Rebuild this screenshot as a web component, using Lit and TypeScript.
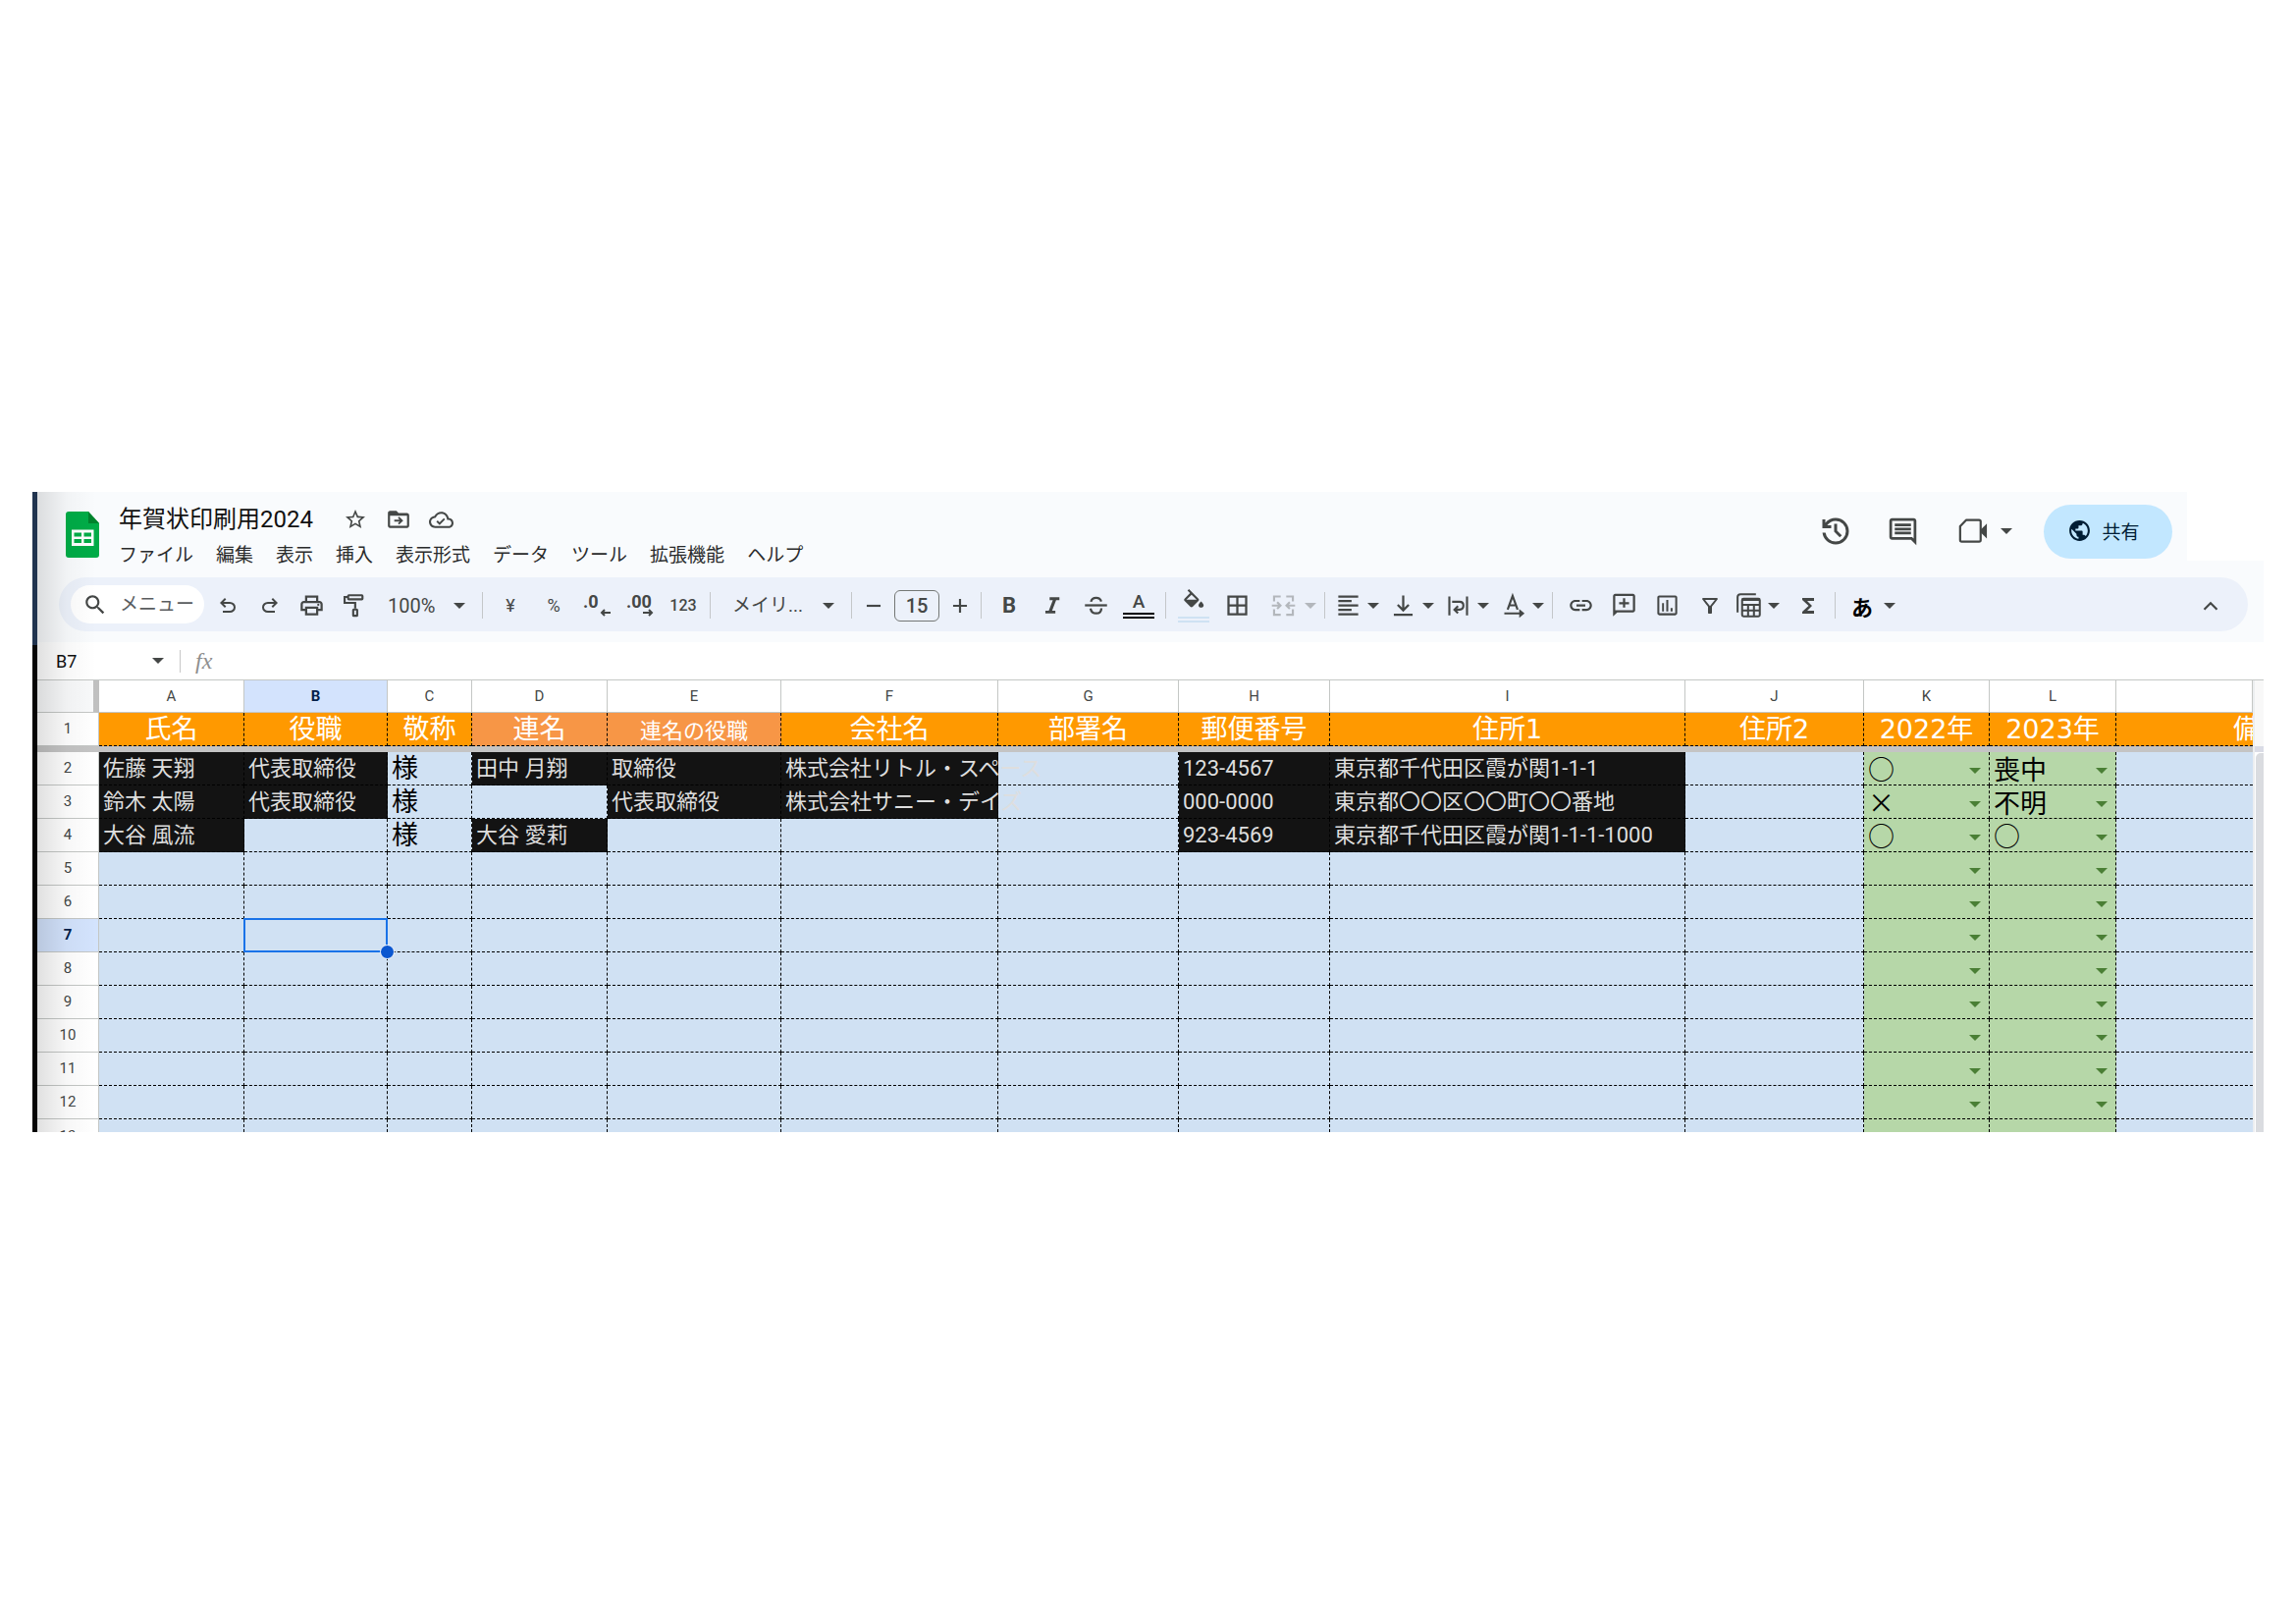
import { LitElement, html, svg, css, nothing } from "lit";
import type { TemplateResult } from "lit";
import { customElement, property } from "lit/decorators.js";
import { classMap } from "lit/directives/class-map.js";

const ICONS: Record<string, TemplateResult> = {
  search: svg`<path d="M15.5 14h-.79l-.28-.27C15.41 12.59 16 11.11 16 9.5 16 5.91 13.09 3 9.5 3S3 5.91 3 9.5 5.91 16 9.5 16c1.61 0 3.09-.59 4.23-1.57l.27.28v.79l5 4.99L20.49 19l-4.99-5zm-6 0C7.01 14 5 11.99 5 9.5S7.01 5 9.5 5 14 7.01 14 9.5 11.99 14 9.5 14z"/>`,
  undo: svg`<path d="M7 19v-2h7.1q1.575 0 2.738-1T18 13.5 16.838 11 14.1 10H7.8l2.6 2.6L9 14 4 9l5-5 1.4 1.4L7.8 8h6.3q2.425 0 4.163 1.575T20 13.5t-1.737 3.925T14.1 19z"/>`,
  redo: svg`<path d="M17 19v-2H9.9q-1.575 0-2.738-1T6 13.5 7.162 11 9.9 10h6.3l-2.6 2.6L15 14l5-5-5-5-1.4 1.4L16.2 8H9.9Q7.475 8 5.737 9.575T4 13.5t1.737 3.925T9.9 19z"/>`,
  print: svg`<path d="M19 8h-1V3H6v5H5c-1.66 0-3 1.34-3 3v6h4v4h12v-4h4v-6c0-1.66-1.34-3-3-3zM8 5h8v3H8V5zm8 12v2H8v-4h8v4zm2-2v-2H6v2H4v-4c0-.55.45-1 1-1h14c.55 0 1 .45 1 1v4h-2z"/><circle cx="18" cy="11.5" r="1"/>`,
  roller: svg`<g fill="none" stroke="currentColor" stroke-width="1.9"><rect x="6.8" y="2.9" width="13" height="3.6" rx=".6"/><path d="M6.8 4.4H3.6v5.4h9.6v5"/><rect x="11.4" y="15.8" width="3.6" height="5.6" rx=".4"/></g>`,
  star: svg`<path d="M22 9.24l-7.19-.62L12 2 9.19 8.63 2 9.24l5.46 4.73L5.82 21 12 17.27 18.18 21l-1.63-7.03L22 9.24zM12 15.4l-3.76 2.27 1-4.28-3.32-2.88 4.38-.38L12 6.1l1.71 4.04 4.38.38-3.32 2.88 1 4.28L12 15.4z"/>`,
  move: svg`<path d="M20 6h-8l-2-2H4c-1.1 0-2 .9-2 2v12c0 1.1.9 2 2 2h16c1.1 0 2-.9 2-2V8c0-1.1-.9-2-2-2zm0 12H4V8.6h16V18zM12.6 9.4l3.8 3.7-3.8 3.7-1.2-1.2 1.6-1.6H8v-1.8h5l-1.6-1.6z"/>`,
  cloud: svg`<path d="M19.35 10.04C18.67 6.59 15.64 4 12 4 9.11 4 6.6 5.64 5.35 8.04 2.34 8.36 0 10.91 0 14c0 3.31 2.69 6 6 6h13c2.76 0 5-2.24 5-5 0-2.64-2.05-4.78-4.65-4.96zM19 18H6c-2.21 0-4-1.79-4-4 0-2.05 1.53-3.76 3.56-3.97l1.07-.11.5-.95C8.08 7.14 9.94 6 12 6c2.62 0 4.88 1.86 5.39 4.43l.3 1.5 1.53.11c1.56.1 2.78 1.41 2.78 2.96 0 1.65-1.35 3-3 3zm-8.6-3.6l-1.9-1.9-1.3 1.3 3.2 3.2 5.4-5.4-1.3-1.3z"/>`,
  history: svg`<path d="M12 21q-3.45 0-6.012-2.287T3.05 13H5.1q.35 2.6 2.313 4.3T12 19q2.925 0 4.963-2.037T19 12t-2.037-4.962T12 5q-1.725 0-3.225.8T6.25 8H9v2H3V4h2v2.35q1.275-1.6 3.113-2.475T12 3q1.875 0 3.513.713t2.85 1.924 1.925 2.85T21 12t-.712 3.513-1.925 2.85-2.85 1.925T12 21m2.8-4.8L11 12.4V7h2v4.6l3.2 3.2z"/>`,
  comment: svg`<path d="M21.99 4c0-1.1-.89-2-1.99-2H4c-1.1 0-2 .9-2 2v12c0 1.1.9 2 2 2h14l4 4-.01-18zM20 4v13.17L18.83 16H4V4h16zM6 12h12v2H6zm0-3h12v2H6zm0-3h12v2H6z"/>`,
  video: svg`<path fill="none" stroke="currentColor" stroke-width="1.6" stroke-linejoin="round" d="M7.2 3.4h9.6q1.2 0 1.2 1.2v13.6q0 1.2-1.2 1.2H4q-1.2 0-1.2-1.2V8z"/><path d="M18 10.6L22.6 6v11L18 12.600z"/>`,
  globe: svg`<path d="M12 2C6.48 2 2 6.48 2 12s4.48 10 10 10 10-4.48 10-10S17.52 2 12 2zm-1 17.93c-3.95-.49-7-3.85-7-7.93 0-.62.08-1.21.21-1.79L9 15v1c0 1.1.9 2 2 2v1.93zm6.9-2.54c-.26-.81-1-1.39-1.9-1.39h-1v-3c0-.55-.45-1-1-1H8v-2h2c.55 0 1-.45 1-1V7h2c1.1 0 2-.9 2-2v-.41c2.93 1.19 5 4.06 5 7.41 0 2.08-.8 3.97-2.1 5.39z"/>`,
  minus: svg`<path d="M5.500 11h13v2h-13z"/>`,
  plus: svg`<path d="M5.500 11H11V5.500h2V11h5.500v2H13v5.500h-2V13H5.500z"/>`,
  italic: svg`<path d="M9.500 4h9.200v2.700h-3.100l-3.800 9.800h3.100v2.700H5.500v-2.700h3.200l3.800-9.800h-3z"/>`,
  strike: svg`<g fill="none" stroke="currentColor" stroke-width="2"><path d="M2 12h20"/><path d="M16.800 8.500Q15.700 5.300 12.200 5.300 8.200 5.300 7.500 8.800"/><path d="M7 14.800Q8 19.300 12.200 19.300q4.600 0 4.700-4.700"/></g>`,
  fill: svg`<path d="M16.56 8.94L7.62 0 6.21 1.41l2.38 2.38-5.15 5.15c-.59.59-.59 1.54 0 2.12l5.5 5.5c.29.29.68.44 1.06.44s.77-.15 1.06-.44l5.5-5.5c.59-.58.59-1.53 0-2.12zM5.21 10L10 5.21 14.79 10H5.21zM19 11.5s-2.400 2.170-2.400 3.700c0 1.200 1.100 2.200 2.400 2.200s2.400-1 2.400-2.200c0-1.530-2.400-3.700-2.400-3.700z"/>`,
  borders: svg`<path d="M3 3v18h18V3H3zm8 16H5v-6h6v6zm0-8H5V5h6v6zm8 8h-6v-6h6v6zm0-8h-6V5h6v6z"/>`,
  merge: svg`<g fill="none" stroke="currentColor" stroke-width="1.9"><path d="M9.500 4H3.500v4.500M3.500 15.500V20.500h6M14.500 4h6v4.500M20.500 15.500v5h-6"/><path d="M1.500 12.200h7M6.300 9.200l3 3-3 3M22.500 12.200h-7M17.700 9.200l-3 3 3 3"/></g>`,
  align: svg`<path d="M15 15H3v2h12v-2zm0-8H3v2h12V7zM3 13h18v-2H3v2zm0 8h18v-2H3v2zM3 3v2h18V3H3z"/>`,
  bottom: svg`<path fill="none" stroke="currentColor" stroke-width="2" d="M12 3v13M7 11.500l5 5 5-5M3.500 20.500h17"/>`,
  wrap: svg`<path fill="none" stroke="currentColor" stroke-width="1.900" d="M4 4v17M20 4v17M6.500 8.800h6.800q3.400 0 3.400 3.500t-3.400 3.600H9M11.800 12.700L8.600 15.900l3.200 3.200"/>`,
  rotate: svg`<path fill="none" stroke="currentColor" stroke-width="1.900" d="M7 15.800L11.500 3.500 16 15.800M8.300 12h6.400M4 19.300h16"/><path d="M17.500 15.300l4.800 4-4.800 4z"/>`,
  link: svg`<path d="M3.900 12c0-1.710 1.390-3.100 3.100-3.100h4V7H7c-2.760 0-5 2.240-5 5s2.240 5 5 5h4v-1.900H7c-1.710 0-3.100-1.390-3.100-3.100zM8 13h8v-2H8v2zm9-6h-4v1.900h4c1.710 0 3.100 1.390 3.100 3.100s-1.390 3.100-3.100 3.100h-4V17h4c2.760 0 5-2.240 5-5s-2.240-5-5-5z"/>`,
  addcomment: svg`<path d="M20 1.500H4c-1.100 0-2 .9-2 2V22l3.800-3.500H20c1.100 0 2-.9 2-2v-13c0-1.100-.9-2-2-2zm0 15H4v-13h16v13zM11 14h2v-3h3.500V9H13V5.500h-2V9H7.500v2H11z"/>`,
  chart: svg`<path d="M9 17.500H7.300V10H9v7.500zm3.900 0h-1.800V7h1.800v10.500zm3.900 0h-1.800v-3h1.800v3zM19 19.200H4.800V4.800H19.200V19.200zM19.200 3H4.800C3.800 3 3 3.800 3 4.800v14.400c0 1 .8 1.800 1.800 1.800h14.400c1 0 1.800-.8 1.800-1.800V4.800c0-1-.8-1.800-1.800-1.800z"/>`,
  filter: svg`<path d="M7 6h10l-5.010 6.300L7 6zm-2.750-.39C6.270 8.200 10 13 10 13v6c0 .550.450 1 1 1h2c.550 0 1-.450 1-1v-6s3.720-4.800 5.740-7.390c.510-.660.040-1.610-.790-1.610H5.040c-.830 0-1.300.950-.790 1.610z"/>`,
  views: svg`<g fill="none" stroke="currentColor" stroke-width="1.800"><path d="M18.500 2H4.500Q1.900 2 1.900 4.500v14"/><rect x="6" y="6" width="16" height="16" rx="1.300"/><path d="M6 11.500h16M6 16.700h16M11.400 11.500V22M16.700 11.500V22"/></g><path d="M6 6h16v2H6z"/>`,
  sigma: svg`<path d="M18 4H6v2l6.500 6L6 18v2h12v-3h-7l5-5-5-5h7z"/>`,
  up: svg`<path fill="none" stroke="currentColor" stroke-width="2" d="M6 15.500l6-6 6 6"/>`,
};

const icon = (name: string, size = 27) => html`<svg
  class="icon" width=${size} height=${size} viewBox="0 0 24 24" aria-hidden="true">${ICONS[name]}</svg>`;

const caret = () => html`<svg class="caret" width="12" height="6" viewBox="0 0 12 6" aria-hidden="true"><path d="M0 0h12L6 6z"/></svg>`;

const controlReset = css`
  * { box-sizing: border-box; }
  button, input, select {
    font: inherit; color: inherit; background: none; border: 0;
    padding: 0; margin: 0; min-width: 0; appearance: none; outline: 0; border-radius: 0;
  }
  button { display: flex; align-items: center; justify-content: center; }
  svg { display: block; flex: none; fill: currentColor; }
`;

@customElement("title-bar")
class TitleBar extends LitElement {
  static styles = [controlReset, css`
    :host { display: flex; background: #f9fbfd; height: 87px; padding-left: 29px; color: #444746; }
    .logo { margin-top: 20px; }
    .doc { margin-left: 18px; padding-top: 10px; }
    .top { display: flex; align-items: center; height: 36px; gap: 18px; }
    h1 { margin: 0 12px 0 2px; font-size: 24px; font-weight: 400; line-height: 36px; color: #111; }
    .top button { width: 26px; height: 26px; }
    nav { display: flex; gap: 23px; padding-left: 2px; height: 37px; align-items: center; }
    nav button { font-size: 19px; line-height: 28px; color: #2a2b2c; white-space: nowrap; }
    .actions { margin-left: auto; display: flex; align-items: center; height: 80px; padding-right: 15px; }
    .tool { width: 68px; height: 44px; }
    .call { width: 98px; height: 44px; gap: 12px; }
    .share {
      width: 131px; height: 55px; border-radius: 28px; background: #c2e7ff; color: #001d35;
      gap: 10px; font-size: 19px; margin-left: 12px; padding: 0 9px 2px 0;
    }
    .edge { width: 78px; height: 70px; background: #fff; }
  `];
  render() {
    const menus = ["ファイル", "編集", "表示", "挿入", "表示形式", "データ", "ツール", "拡張機能", "ヘルプ"];
    return html`
      <svg class="logo" width="34" height="47" viewBox="0 0 34 47" aria-hidden="true">
        <path fill="#00ac47" d="M3 0h20l11 12v32q0 3-3 3H3q-3 0-3-3V3q0-3 3-3z"/>
        <path fill="#00832d" d="M23 0l11 12H23z"/>
        <path fill="#fff" d="M6 18.500h22.500V35H6z"/>
        <path fill="#00ac47" d="M8.500 21.500H16v4H8.500zM18.500 21.500H26v4h-7.500zM8.500 28H16v4H8.500zM18.500 28H26v4h-7.500z"/>
      </svg>
      <div class="doc">
        <div class="top">
          <h1>年賀状印刷用2024</h1>
          <button aria-label="スター">${icon("star", 24)}</button>
          <button aria-label="移動">${icon("move", 26)}</button>
          <button aria-label="保存状況">${icon("cloud", 25)}</button>
        </div>
        <nav>${menus.map((m) => html`<button>${m}</button>`)}</nav>
      </div>
      <div class="actions">
        <button class="tool" aria-label="変更履歴">${icon("history", 36)}</button>
        <button class="tool" aria-label="コメント">${icon("comment", 33)}</button>
        <button class="call" aria-label="通話">${icon("video", 33)}${caret()}</button>
        <button class="share">${icon("globe", 25)}<span>共有</span></button>
      </div>
      <div class="edge"></div>
    `;
  }
}

@customElement("tool-bar")
class ToolBar extends LitElement {
  static styles = [controlReset, css`
    :host { display: block; background: #f9fbfd; padding: 0 16px 11px 22px; color: #444746; }
    .pill {
      display: flex; align-items: center; height: 55px; border-radius: 28px;
      background: #ecf1fa; padding: 2px 16px 0 12px;
    }
    .search {
      display: flex; align-items: center; gap: 12px; width: 136px; height: 39px; border-radius: 20px;
      background: #fff; padding-left: 12px; margin: 0 2px 2px 0; font-size: 19px;
    }
    .search input { width: 80px; }
    .search input::placeholder { color: #5a5d5f; opacity: 1; }
    .group { display: flex; align-items: center; }
    .spaced { gap: 4px; }
    .btn { width: 44px; height: 39px; font-size: 18px; }
    .edit .btn { width: 43px; }
    .step { width: 32px; height: 39px; }
    .bold { font-size: 22px; font-weight: 700; }
    .num { font-size: 16px; font-weight: 500; }
    .drop { width: 52px; height: 39px; justify-content: flex-start; padding-left: 4px; gap: 6px; }
    .wide { width: 62px; padding-left: 12px; gap: 8px; }
    .off { color: #b3b7bc; }
    .ime { font-size: 22px; font-weight: 700; padding-left: 10px; gap: 11px; }
    .ime span { color: #000; }
    .rule { width: 1px; height: 27px; margin: 0 6px 0 5px; background: #c4c7c9; flex: none; }
    .pick { display: flex; align-items: center; height: 39px; position: relative; }
    .pick select { width: 100%; height: 39px; }
    .pick .caret { position: absolute; right: 12px; pointer-events: none; }
    .zoom { width: 104px; font-size: 20px; padding-left: 13px; }
    .font { width: 132px; font-size: 19px; padding-left: 16px; }
    .size {
      width: 46px; height: 32px; margin: 0 5px; border: 1px solid #747775; border-radius: 6px;
      text-align: center; font-size: 20px; font-weight: 500;
    }
    .swatch { flex-direction: column; gap: 2px; font-size: 19px; font-weight: 500; line-height: 19px; }
    .bars { width: 32px; height: 6px; border: solid #000; border-width: 2px 0; }
    .pale { border-color: #cfe2f3; }
    .dec { flex-direction: column; font-size: 18px; font-weight: 700; line-height: 14px; align-items: stretch; padding: 0 8px; }
    .dec span { text-align: left; }
    .dec svg { align-self: flex-end; }
    .end { margin-left: auto; }
  `];
  render() {
    const b = (name: string, label: string, size = 27) =>
      html`<button class="btn" aria-label=${label}>${icon(name, size)}</button>`;
    const d = (name: string, label: string) =>
      html`<button class="drop" aria-label=${label}>${icon(name)}${caret()}</button>`;
    const rule = html`<span class="rule"></span>`;
    const arrow = (right: boolean) => html`<svg width="11" height="8" viewBox="0 0 11 8" aria-hidden="true">
      <path fill="none" stroke="currentColor" stroke-width="2" d=${right ? "M0 4h9M6 1l3 3-3 3" : "M11 4H2M5 1L2 4l3 3"}/></svg>`;
    return html`
      <div class="pill" role="toolbar">
        <label class="search">${icon("search", 26)}<input aria-label="メニュー" placeholder="メニュー" /></label>
        <div class="group edit">
          ${b("undo", "元に戻す", 24)}${b("redo", "やり直し", 24)}${b("print", "印刷")}${b("roller", "書式を貼り付け")}
        </div>
        <label class="pick zoom"><select aria-label="ズーム"><option>100%</option></select>${caret()}</label>
        ${rule}
        <div class="group">
          <button class="btn">¥</button>
          <button class="btn">%</button>
          <button class="btn dec" aria-label="小数点以下の桁数を減らす"><span>.0</span>${arrow(false)}</button>
          <button class="btn dec" aria-label="小数点以下の桁数を増やす"><span>.00</span>${arrow(true)}</button>
          <button class="btn num">123</button>
        </div>
        ${rule}
        <label class="pick font"><select aria-label="フォント"><option>メイリ...</option></select>${caret()}</label>
        ${rule}
        <div class="group">
          <button class="step" aria-label="縮小">${icon("minus", 26)}</button>
          <input class="size" aria-label="フォントサイズ" .value=${"15"} />
          <button class="step" aria-label="拡大">${icon("plus", 26)}</button>
        </div>
        ${rule}
        <div class="group">
          <button class="btn bold">B</button>
          ${b("italic", "斜体", 26)}${b("strike", "取り消し線")}
          <button class="btn swatch"><span>A</span><span class="bars"></span></button>
        </div>
        ${rule}
        <div class="group">
          <button class="btn swatch" aria-label="塗りつぶしの色">${icon("fill", 26)}<span class="bars pale"></span></button>
          ${b("borders", "枠線")}
          <button class="drop wide off" disabled aria-label="セルを結合">${icon("merge")}${caret()}</button>
        </div>
        ${rule}
        <div class="group spaced">
          ${d("align", "水平方向の配置")}${d("bottom", "垂直方向の配置")}${d("wrap", "折り返し")}${d("rotate", "回転")}
        </div>
        ${rule}
        <div class="group">
          ${b("link", "リンク")}${b("addcomment", "コメントを挿入")}${b("chart", "グラフ")}${b("filter", "フィルタ", 24)}
        </div>
        <div class="group spaced">${d("views", "表示")}${b("sigma", "関数", 24)}</div>
        ${rule}
        <button class="drop ime"><span>あ</span>${caret()}</button>
        <button class="btn end" aria-label="メニューを隠す">${icon("up", 26)}</button>
      </div>
    `;
  }
}

@customElement("formula-bar")
class FormulaBar extends LitElement {
  static styles = [controlReset, css`
    :host { display: flex; align-items: center; height: 38px; background: #fff; color: #444746; }
    .name { width: 90px; padding-left: 19px; font-size: 18px; color: #111; }
    .open { width: 55px; height: 30px; padding-left: 10px; }
    .rule { width: 1px; height: 23px; background: #c7c7c7; }
    .fx { font: italic 24px "Liberation Serif", serif; color: #8f8f8f; margin-left: 15px; line-height: 30px; }
    .formula { flex: 1; height: 30px; margin-left: 12px; }
  `];
  render() {
    return html`
      <input class="name" aria-label="名前ボックス" .value=${"B7"} />
      <button class="open" aria-label="名前付き範囲">${caret()}</button>
      <span class="rule"></span>
      <label class="fx" for="formula">fx</label>
      <input id="formula" class="formula" />
    `;
  }
}

type Tone = "dark" | "blue" | "green";
interface Cell { text: string; tone: Tone; }

const COLUMNS = [
  { id: "A", width: 148, title: "氏名" },
  { id: "B", width: 146, title: "役職" },
  { id: "C", width: 86, title: "敬称" },
  { id: "D", width: 138, title: "連名", soft: true },
  { id: "E", width: 177, title: "連名の役職", soft: true, small: true },
  { id: "F", width: 221, title: "会社名" },
  { id: "G", width: 184, title: "部署名" },
  { id: "H", width: 154, title: "郵便番号" },
  { id: "I", width: 362, title: "住所1" },
  { id: "J", width: 182, title: "住所2" },
  { id: "K", width: 128, title: "2022年" },
  { id: "L", width: 129, title: "2023年" },
  { id: "", width: 0, title: "備考" },
];

const RECORDS: Record<string, string>[] = [
  { A: "佐藤 天翔", B: "代表取締役", C: "様", D: "田中 月翔", E: "取締役", F: "株式会社リトル・スペース", H: "123-4567", I: "東京都千代田区霞が関1-1-1", K: "○", L: "喪中" },
  { A: "鈴木 太陽", B: "代表取締役", C: "様", E: "代表取締役", F: "株式会社サニー・デイズ", H: "000-0000", I: "東京都〇〇区〇〇町〇〇番地", K: "×", L: "不明" },
  { A: "大谷 風流", C: "様", D: "大谷 愛莉", H: "923-4569", I: "東京都千代田区霞が関1-1-1-1000", K: "○", L: "○" },
];

@customElement("sheet-grid")
class SheetGrid extends LitElement {
  @property() active = "B7";

  static styles = [controlReset, css`
    :host { display: flex; border-top: 1px solid #c4c7c5; background: #fff; }
    .view { flex: 1; min-width: 0; overflow: hidden; }
    table { width: 100%; table-layout: fixed; border-collapse: separate; border-spacing: 0; background: #d0e1f3; }
    th, td { padding: 0; white-space: nowrap; font-weight: 400; }
    .letters th {
      height: 33px; background: #fff; color: #444746; font-size: 15px; line-height: 32px;
      border-right: 1px solid #c4c7c5; border-bottom: 1px solid #c4c7c5;
    }
    .letters .corner { background: #f8f9fa; border-right: 6px solid #c0c0c0; }
    .row {
      background: #fff; color: #444746; font-size: 15px; line-height: 33px;
      border-right: 1px solid #c4c7c5; border-bottom: 1px solid #c4c7c5;
    }
    .letters .on, .row.on { background: #d3e3fd; color: #041e49; font-weight: 700; }
    .title, td {
      height: 34px; line-height: 33px; border-right: 1px dashed #000; border-bottom: 1px dashed #000;
    }
    .title {
      background: #ff9900; color: #fff; font-family: "DejaVu Sans", "Noto Sans CJK JP", sans-serif;
      font-size: 27px; overflow: hidden;
    }
    .soft { background: #f79646; }
    .small { font-size: 22px; line-height: 29px; padding-top: 4px; }
    .title:last-child { text-align: left; padding-left: 119px; border-right: 0; text-overflow: clip; }
    td:last-child { border-right: 0; }
    .freeze td { height: 6px; line-height: 6px; background: #c4c4c4; border: 0; }
    td { font-size: 22px; padding-left: 4px; }
    .text { position: relative; }
    .dark { background: #131313; color: #dedede; }
    .green { background: #b6d7a8; padding: 0; }
    .big { font-family: "DejaVu Sans", "Noto Sans CJK JP", sans-serif; font-size: 27px; color: #000; }
    .choice { display: block; position: relative; height: 33px; color: #4a7f35; }
    .choice select {
      width: 100%; height: 33px; line-height: 33px; padding-left: 4px; color: #000;
      font-family: "Noto Sans CJK JP", sans-serif; font-size: 27px;
    }
    .choice .caret { position: absolute; right: 8px; top: 16px; pointer-events: none; }
    .active { position: relative; }
    .active::before { content: ""; position: absolute; inset: -1px; border: 2px solid #1a73e8; }
    .active::after {
      content: ""; position: absolute; right: -8px; bottom: -8px; width: 13px; height: 13px;
      border: 1px solid #fff; border-radius: 50%; background: #0b57d0; z-index: 1;
    }
    .partial .cut { height: 13px; line-height: 35px; overflow: hidden; }
    .partial td { height: 13px; line-height: 12px; border-bottom: 0; }
    .partial .row { border-bottom: 0; }
    .rail { width: 11px; border-left: 2px solid #eceef0; display: flex; flex-direction: column; }
    .rail-head { height: 67px; background: #f8f8f8; }
    .rail-freeze { height: 6px; background: #dadce6; }
    .thumb { flex: 1; margin: 1px 0 0 1px; border-radius: 5px 0 0 0; background: #dadce0; }
  `];

  private cell(id: string, n: number): Cell {
    const text = RECORDS[n - 2]?.[id] ?? "";
    if (id === "K" || id === "L") return { text, tone: "green" };
    return { text, tone: text && id !== "C" ? "dark" : "blue" };
  }

  private renderCell(id: string, n: number, partial: boolean) {
    const { text, tone } = this.cell(id, n);
    const classes = classMap({
      [tone]: true,
      big: id === "C",
      active: id + n === this.active,
    });
    if (tone === "green" && !partial) {
      return html`<td class=${classes}><label class="choice">
        <select aria-label=${id + n}><option>${text}</option></select>${caret()}</label></td>`;
    }
    return html`<td class=${classes}>${text ? html`<span class="text">${text}</span>` : nothing}</td>`;
  }

  render() {
    const rows = Array.from({ length: 12 }, (_, i) => i + 2);
    const col = this.active[0];
    const row = Number(this.active.slice(1));
    return html`
      <div class="view">
        <table>
          <colgroup>
            <col style="width:63px" />
            ${COLUMNS.map((c) => (c.width ? html`<col style="width:${c.width}px" />` : html`<col />`))}
          </colgroup>
          <thead>
            <tr class="letters">
              <th class="corner"></th>
              ${COLUMNS.map((c) => html`<th scope="col" class=${classMap({ on: c.id === col })}>${c.id}</th>`)}
            </tr>
            <tr>
              <th class="row" scope="row">1</th>
              ${COLUMNS.map((c) => html`<th class=${classMap({ title: true, soft: !!c.soft, small: !!c.small })}>${c.title}</th>`)}
            </tr>
            <tr class="freeze"><td colspan="14"></td></tr>
          </thead>
          <tbody>
            ${rows.map((n) => {
              const partial = n === 13;
              return html`<tr class=${classMap({ partial })}>
                <th class=${classMap({ row: true, on: n === row })} scope="row">
                  ${partial ? html`<div class="cut">${n}</div>` : n}
                </th>
                ${COLUMNS.map((c) => this.renderCell(c.id, n, partial))}
              </tr>`;
            })}
          </tbody>
        </table>
      </div>
      <div class="rail">
        <div class="rail-head"></div>
        <div class="rail-freeze"></div>
        <div class="thumb"></div>
      </div>
    `;
  }
}

@customElement("app-root")
class AppRoot extends LitElement {
  static styles = css`
    :host {
      display: flex; align-items: center; min-height: 100vh; padding: 0 33px; box-sizing: border-box;
      background: #fff; font-family: Roboto, "Noto Sans CJK JP", sans-serif;
    }
    .window { flex: 1; min-width: 0; display: flex; }
    .backdrop { width: 5px; background: linear-gradient(#21344f 0 24%, #060505 24%); }
    .app { flex: 1; min-width: 0; position: relative; }
    .shade {
      position: absolute; left: 0; top: 0; bottom: 0; width: 60px; pointer-events: none;
      background: linear-gradient(90deg, rgba(0, 0, 0, 0.12), rgba(0, 0, 0, 0.03) 50%, rgba(0, 0, 0, 0));
    }
  `;
  render() {
    return html`
      <main class="window">
        <div class="backdrop"></div>
        <div class="app">
          <title-bar></title-bar>
          <tool-bar></tool-bar>
          <formula-bar></formula-bar>
          <sheet-grid></sheet-grid>
          <div class="shade"></div>
        </div>
      </main>
    `;
  }
}
